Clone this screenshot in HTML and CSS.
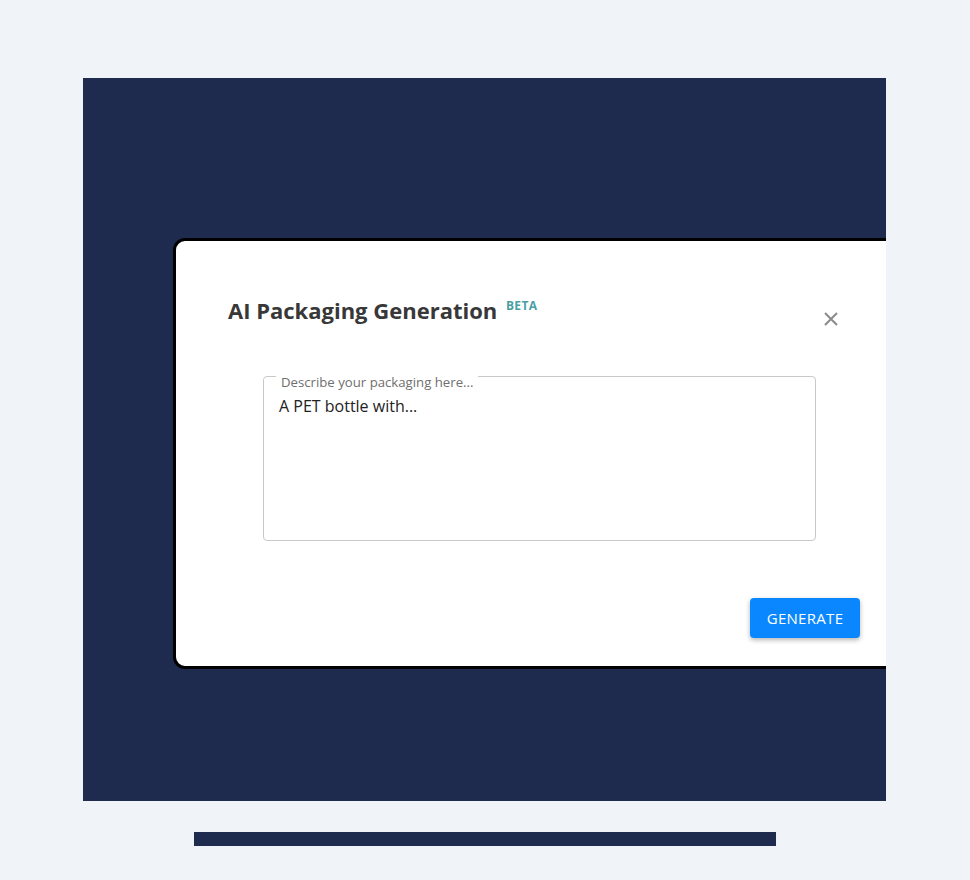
FILE: index.html
```html
<!DOCTYPE html>
<html lang="en">
<head>
  <meta charset="UTF-8">
  <title>AI Packaging Generation</title>
  <link rel="stylesheet" href="styles.css">
</head>
<body>
  <div class="stage">
    <div class="modal">
      <div class="modal-header">
        <h2 class="modal-title">AI Packaging Generation <sup class="beta">BETA</sup></h2>
        <button class="close" aria-label="Close">
          <svg width="14" height="14" viewBox="0 0 14 14">
            <path d="M1 1 L13 13 M13 1 L1 13" stroke="#8a8a8a" stroke-width="2" fill="none"/>
          </svg>
        </button>
      </div>

      <fieldset class="prompt">
        <legend>Describe your packaging here...</legend>
        <textarea id="prompt">A PET bottle with...</textarea>
      </fieldset>

      <button class="generate">GENERATE</button>
    </div>
  </div>
  <div class="bar"></div>
</body>
</html>
```

FILE: styles.css
```css
body {
  margin: 0;
  padding-top: 78px;
  background-color: #f0f3f8;
  font-family: 'Open Sans', 'Noto Sans', sans-serif;
}

.stage {
  width: 803px;
  height: 723px;
  margin-left: 83px;
  padding: 160px 0 0 90px;
  box-sizing: border-box;
  background: #1e2a4e;
  overflow: hidden;
}

.modal {
  width: 733px;
  height: 431px;
  box-sizing: border-box;
  background: #ffffff;
  border: 3px solid #000000;
  border-radius: 12px;
  padding: 54px 43px 0 52px;
  display: flex;
  flex-direction: column;
}

.modal-header {
  display: flex;
  justify-content: space-between;
  align-items: flex-start;
  height: 30px;
}

.modal-title {
  margin: 0;
  font-size: 22px;
  line-height: 30px;
  font-weight: 700;
  color: #383838;
}

.beta {
  font-size: 12px;
  font-weight: 700;
  color: #4a9fa3;
  margin-left: 3px;
  vertical-align: 9px;
  line-height: 0;
  letter-spacing: 0.3px;
}

.close {
  margin: 17px 22px 0 0;
  padding: 0;
  border: none;
  background: none;
  width: 14px;
  height: 14px;
  display: flex;
  cursor: pointer;
}

.prompt {
  margin: 39px 0 0 35px;
  width: 553px;
  min-width: 0;
  box-sizing: border-box;
  padding: 0 12px;
  border: 1px solid #c9c9c9;
  border-radius: 4px;
}

.prompt legend {
  padding: 11px 5px 0;
  font-size: 13.2px;
  line-height: 14px;
  color: #6f6f6f;
}

.prompt textarea {
  display: block;
  width: 100%;
  height: 151px;
  box-sizing: border-box;
  padding: 6px 3px 0 3px;
  border: none;
  outline: none;
  resize: none;
  font-family: 'Open Sans', 'Noto Sans', sans-serif;
  font-size: 16px;
  line-height: 22px;
  color: #222222;
  background: transparent;
}

.generate {
  align-self: flex-end;
  margin-top: 57px;
  width: 110px;
  height: 40px;
  padding: 0;
  border: none;
  border-radius: 4px;
  background: #0a87ff;
  color: #ffffff;
  font-family: 'Open Sans', 'Noto Sans', sans-serif;
  font-size: 15px;
  letter-spacing: 0.3px;
  box-shadow: 0 2px 5px rgba(0, 0, 0, 0.3);
  cursor: pointer;
}

.bar {
  width: 582px;
  height: 14px;
  margin: 31px 0 0 194px;
  background: #1e2a4e;
}
```
